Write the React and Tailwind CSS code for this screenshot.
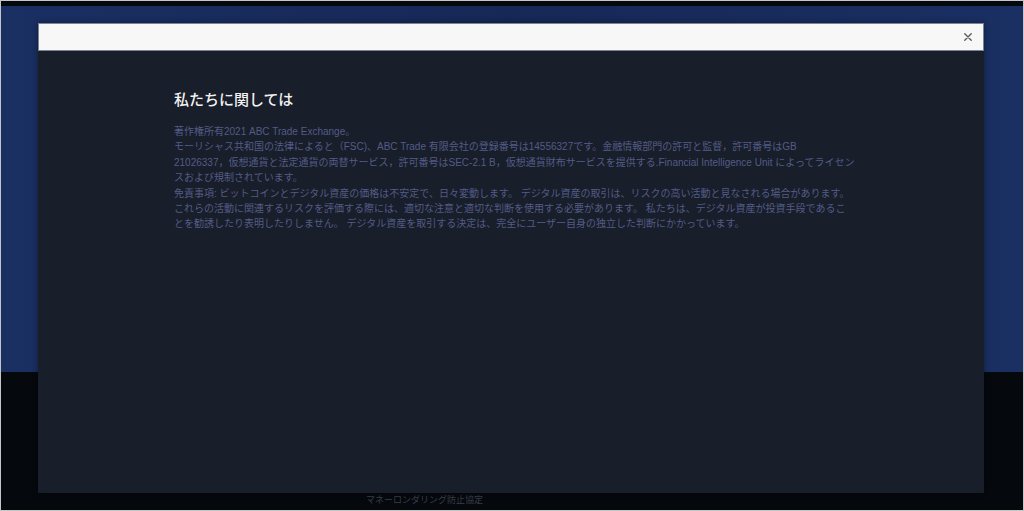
export default function App() {
  return (
    <div
      className="relative w-[1024px] h-[511px] overflow-hidden border border-[#c6c6c6] bg-[#05080d] flex flex-col"
      style={{ fontFamily: '"Liberation Sans", "Noto Sans CJK JP", sans-serif' }}
    >
      {/* page behind the modal */}
      <div className="h-[5px] bg-[#05080d]" />
      <div className="h-[366px] bg-gradient-to-r from-[#1a2f62] via-[#162856] to-[#1a2f62]" />
      <div className="flex-1 flex flex-col justify-end pb-[4px]">
        <p className="pl-[365px] text-[9px] leading-[12px] text-[#3b3f49]">マネーロンダリング防止協定</p>
      </div>

      {/* modal */}
      <div className="absolute left-[37px] top-[22px] w-[946px] h-[470px] flex flex-col shadow-[0_0_6px_rgba(0,0,0,0.4)]">
        <div className="h-[28px] bg-[#f7f7f7] border border-[#7c8399] flex items-center justify-end pr-[7px]">
          <button className="w-[16px] h-[16px] flex items-center justify-center text-[#5a5a5a]" aria-label="close">
            <svg width="8" height="8" viewBox="0 0 10 10" fill="none">
              <path d="M1 1L9 9M9 1L1 9" stroke="currentColor" strokeWidth="1.7" strokeLinecap="round" />
            </svg>
          </button>
        </div>
        <div className="flex-1 bg-[#181e2a] pl-[136px] pt-[39px]">
          <h1 className="text-[15px] leading-[20px] font-medium text-[#f2f2f2]">私たちに関しては</h1>
          <div className="mt-[14px] text-[10px] leading-[15.4px] text-[#535c86] whitespace-nowrap">
            <p>著作権所有2021 ABC Trade Exchange。</p>
            <p>
              モーリシャス共和国の法律によると（FSC)、ABC Trade 有限会社の登録番号は14556327です。金融情報部門の許可と監督，許可番号はGB
              <br />
              21026337，仮想通貨と法定通貨の両替サービス，許可番号はSEC-2.1 B，仮想通貨財布サービスを提供する.Financial Intelligence Unit によってライセン
              <br />
              スおよび規制されています。
            </p>
            <p>
              免責事項: ビットコインとデジタル資産の価格は不安定で、日々変動します。 デジタル資産の取引は、リスクの高い活動と見なされる場合があります。
              <br />
              これらの活動に関連するリスクを評価する際には、適切な注意と適切な判断を使用する必要があります。 私たちは、デジタル資産が投資手段であるこ
              <br />
              とを勧誘したり表明したりしません。 デジタル資産を取引する決定は、完全にユーザー自身の独立した判断にかかっています。
            </p>
          </div>
        </div>
      </div>
    </div>
  );
}
